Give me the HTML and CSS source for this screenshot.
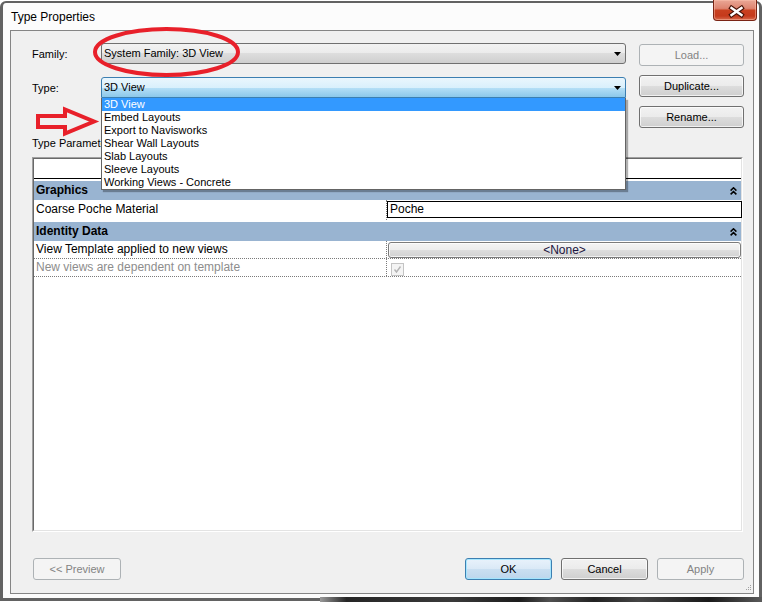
FILE: index.html
```html
<!DOCTYPE html>
<html lang="en">

<head>
    <meta charset="UTF-8">
    <title>Type Properties</title>
    <link rel="stylesheet" href="styles.css">
</head>

<body>
    <div class="window">
        <div class="titlebar">
            <span class="title">Type Properties</span>
            <div class="close">
                <svg width="44" height="21" viewBox="0 0 44 21">
                    <path d="M18.5 9 L28.5 16 M28.5 9 L18.5 16" stroke="#4a1408" stroke-width="4.6" stroke-linecap="square" />
                    <path d="M18.5 9 L28.5 16 M28.5 9 L18.5 16" stroke="#fff" stroke-width="2.4" stroke-linecap="square" />
                </svg>
            </div>
        </div>
        <div class="client">
            <div class="top">
                <div class="fields">
                    <div class="field">
                        <label>Family:</label>
                        <div class="combo">System Family: 3D View<span class="caret"></span></div>
                    </div>
                    <div class="field">
                        <label>Type:</label>
                        <div class="combo open">3D View<span class="caret"></span>
                            <ul class="list">
                                <li class="sel">3D View</li>
                                <li>Embed Layouts</li>
                                <li>Export to Navisworks</li>
                                <li>Shear Wall Layouts</li>
                                <li>Slab Layouts</li>
                                <li>Sleeve Layouts</li>
                                <li>Working Views - Concrete</li>
                            </ul>
                        </div>
                    </div>
                </div>
                <div class="side">
                    <button class="btn" disabled>Load...</button>
                    <button class="btn">Duplicate...</button>
                    <button class="btn">Rename...</button>
                </div>
            </div>
            <!-- the open list covers the end of this label -->
            <div class="params-label">Type Parameters</div>
            <div class="grid">
                <div class="grid-in">
                    <div class="ghead">
                        <div class="hc name">Parameter</div>
                        <div class="hc">Value</div>
                    </div>
                    <div class="group">
                        <div class="gtitle">Graphics
                            <svg class="fold" width="7" height="8" viewBox="0 0 7 8">
                                <path d="M0.6 3.6 L3.5 0.8 L6.4 3.6 M0.6 7.4 L3.5 4.6 L6.4 7.4" stroke="#000" stroke-width="1.5" fill="none" />
                            </svg>
                        </div>
                        <div class="row editing">
                            <div class="name">Coarse Poche Material</div>
                            <div class="val"><div class="edit">Poche</div></div>
                        </div>
                    </div>
                    <div class="group">
                        <div class="gtitle">Identity Data
                            <svg class="fold" width="7" height="8" viewBox="0 0 7 8">
                                <path d="M0.6 3.6 L3.5 0.8 L6.4 3.6 M0.6 7.4 L3.5 4.6 L6.4 7.4" stroke="#000" stroke-width="1.5" fill="none" />
                            </svg>
                        </div>
                        <div class="row">
                            <div class="name">View Template applied to new views</div>
                            <div class="val"><div class="pick">&lt;None&gt;</div></div>
                        </div>
                        <div class="row off">
                            <div class="name">New views are dependent on template</div>
                            <div class="val">
                                <span class="check">
                                    <svg width="11" height="11" viewBox="0 0 11 11">
                                        <path d="M2.5 5.5 L4.5 8 L8.5 2.5" stroke="#b4b4b4" stroke-width="1.4" fill="none" />
                                    </svg>
                                </span>
                            </div>
                        </div>
                    </div>
                </div>
            </div>
            <div class="footer">
                <button class="btn wide" disabled>&lt;&lt; Preview</button>
                <div class="spacer"></div>
                <button class="btn wide default">OK</button>
                <button class="btn wide">Cancel</button>
                <button class="btn wide" disabled>Apply</button>
            </div>
            <svg class="grip" width="6" height="7" viewBox="0 0 6 7">
                <rect x="4" y="0" width="1" height="1" fill="#a0a0a0" />
                <rect x="2" y="2" width="1" height="1" fill="#a0a0a0" />
                <rect x="4" y="2" width="1" height="1" fill="#a0a0a0" />
                <rect x="0" y="4" width="1" height="1" fill="#a0a0a0" />
                <rect x="2" y="4" width="1" height="1" fill="#a0a0a0" />
                <rect x="4" y="4" width="1" height="1" fill="#a0a0a0" />
            </svg>
        </div>
    </div>
    <div class="strip"></div>
    <!-- red markup drawn over the dialog -->
    <svg class="annot" width="767" height="602" viewBox="0 0 767 602">
        <ellipse cx="166.5" cy="52" rx="71.5" ry="23" fill="none" stroke="#e8202a" stroke-width="4" />
        <polygon points="38,116 65,116 65,109.5 94,121.5 65,133.5 65,127 38,127" fill="none" stroke="#e8202a" stroke-width="4" />
    </svg>
</body>

</html>
```

FILE: styles.css
```css
* {
    margin: 0;
    padding: 0;
    box-sizing: border-box;
}

body {
    width: 767px;
    height: 602px;
    position: relative;
    overflow: hidden;
    background: #fff;
    font-family: "Liberation Sans", Arial, sans-serif;
    font-size: 11px;
    color: #000;
}

.window {
    margin-top: 1px;
    width: 762px;
    height: 600px;
    display: flex;
    flex-direction: column;
    background: #fcfcfc;
    border: 3px solid #626262;
    border-top-width: 2px;
    border-radius: 6px 6px 0 0;
    padding: 0 5px 4px 7px;
}

.titlebar {
    height: 27px;
    flex-shrink: 0;
    display: flex;
    justify-content: space-between;
    align-items: flex-start;
    padding-left: 1px;
}

.title {
    font-size: 12px;
    line-height: 15px;
    padding-top: 7px;
}

.close {
    width: 44px;
    height: 21px;
    margin-top: -3px;
    margin-right: -3px;
    border: 1px solid #7a2414;
    border-top: none;
    border-radius: 0 0 4px 4px;
    background: linear-gradient(#eaa796, #de8470 42%, #c9401f 52%, #c53a1c 80%, #d86a4c);
    box-shadow: inset 0 0 0 1px rgba(255, 200, 180, 0.45);
    overflow: hidden;
}

.close svg {
    display: block;
    margin-top: -1px;
    margin-left: -1px;
}

.client {
    flex: 1;
    position: relative;
    display: flex;
    flex-direction: column;
    background: #f0f0f0;
    border: 1px solid #858585;
    padding: 12px 9px 13px 21px;
}

.top {
    display: flex;
    align-items: flex-start;
    gap: 13px;
}

.fields {
    display: flex;
    flex-direction: column;
    gap: 13px;
}

.field {
    display: flex;
    align-items: center;
    height: 21px;
}

.field label {
    width: 69px;
}

.combo {
    position: relative;
    width: 525px;
    height: 21px;
    line-height: 19px;
    padding-left: 2px;
    border: 1px solid #707070;
    border-radius: 3px;
    background: linear-gradient(#f2f2f2, #ebebeb 50%, #dddddd 50%, #cfcfcf);
}

.combo.open {
    border-color: #3c7fb1;
    border-radius: 3px 3px 0 0;
    background: linear-gradient(#eaf6fd, #d9f0fc 50%, #b7e0f7 50%, #8cc8ea);
}

.caret {
    position: absolute;
    right: 4px;
    top: 8px;
    width: 7px;
    height: 4px;
    background: #000;
    clip-path: polygon(0 0, 100% 0, 50% 100%);
}

.list {
    position: absolute;
    z-index: 5;
    left: -1px;
    top: calc(100% + 1px);
    width: 525px;
    list-style: none;
    background: #fff;
    border: 1px solid #646464;
    border-top: none;
    box-shadow: 2px 2px 1px rgba(0, 0, 0, 0.3);
}

.list li {
    height: 13px;
    line-height: 13px;
    padding-left: 2px;
    white-space: nowrap;
}

.list li.sel {
    background: #3399ff;
    color: #fff;
}

.side {
    width: 105px;
    display: flex;
    flex-direction: column;
    gap: 9px;
    margin-top: 1px;
}

.btn {
    height: 22px;
    font-family: "Liberation Sans", Arial, sans-serif;
    font-size: 11px;
    color: #000;
    border: 1px solid #707070;
    border-radius: 3px;
    background: linear-gradient(#f2f2f2, #ebebeb 50%, #dddddd 50%, #cfcfcf);
    box-shadow: inset 0 0 0 1px rgba(255, 255, 255, 0.7);
}

.btn:disabled {
    color: #838383;
    border-color: #adb2b5;
    background: #f4f4f4;
    box-shadow: none;
}

.btn.default {
    border-color: #3c7fb1;
    background: linear-gradient(#e8f2fb, #dae9f6 50%, #cadff1 50%, #bcd6ec);
    box-shadow: inset 0 0 0 1px rgba(160, 230, 255, 0.9);
}

.params-label {
    margin-top: 9px;
    line-height: 13px;
    white-space: nowrap;
}

.grid {
    flex: 1;
    margin-top: 7px;
    margin-right: 1px;
    border: 1px solid;
    border-color: #a0a0a0 #fff #fff #a0a0a0;
}

.grid-in {
    height: 100%;
    background: #fff;
    border: 1px solid;
    border-color: #696969 #e3e3e3 #e3e3e3 #696969;
    font-size: 12px;
}

.ghead {
    display: flex;
    height: 20px;
    line-height: 19px;
    border-bottom: 1px solid #000;
}

.hc {
    flex: 1;
    text-align: center;
}

.ghead .name {
    flex: none;
    border-right: 1px solid #d5d5d5;
}

.group {
    margin-top: 2px;
}

.gtitle {
    height: 19px;
    line-height: 19px;
    padding: 0 4px 0 2px;
    display: flex;
    justify-content: space-between;
    align-items: center;
    font-weight: bold;
    background: #99b4d1;
}

.row {
    display: flex;
    height: 18px;
    border-bottom: 1px dotted #7a7a7a;
}

.row.editing {
    height: 20px;
    border-bottom: none;
}

.name {
    width: 353px;
    line-height: 17px;
    padding-left: 2px;
    border-right: 1px dotted #7a7a7a;
    white-space: nowrap;
}

.row.editing .name {
    line-height: 18px;
}

.off .name {
    color: #8d8d8d;
}

.val {
    flex: 1;
}

.edit {
    margin: 1px -1px 0 0;
    height: 17px;
    line-height: 15px;
    padding-left: 2px;
    border: 1px solid #000;
}

.pick {
    margin: 1px 0 0 1px;
    height: 16px;
    line-height: 14px;
    text-align: center;
    color: #1c1440;
    border: 1px solid #7b7b7b;
    border-radius: 3px;
    background: linear-gradient(#f4f4f4, #ececec 50%, #dedede 50%, #d2d2d2);
    box-shadow: inset 0 0 0 1px rgba(255, 255, 255, 0.7);
}

.check {
    display: block;
    width: 13px;
    height: 13px;
    margin: 4px 0 0 4px;
    border: 1px solid #c4c4c4;
    background: #f4f4f4;
}

.check svg {
    display: block;
}

.footer {
    display: flex;
    gap: 9px;
    margin-top: 26px;
}

.spacer {
    flex: 1;
}

.btn.wide {
    width: 87px;
}

.footer .btn:first-child {
    margin-left: 1px;
    width: 88px;
}

.grip {
    position: absolute;
    right: 1px;
    bottom: 1px;
}

.strip {
    position: absolute;
    left: 320px;
    top: 597px;
    width: 442px;
    height: 5px;
    background: linear-gradient(to right, #9a9a9a, #262626 6%, #3a3a3a 30%, #1c1c1c 45%, #505050 52%, #222 62%, #444 72%, #1a1a1a 88%, #5a5a5a);
}

.annot {
    position: absolute;
    left: 0;
    top: 0;
    z-index: 10;
    pointer-events: none;
}
```
